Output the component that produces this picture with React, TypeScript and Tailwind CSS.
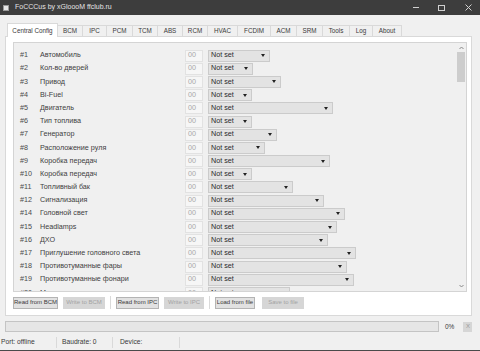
// [title, width]
const tabs: [string, number][] = [
  ["Central Config", 51],
  ["BCM", 25],
  ["IPC", 24],
  ["PCM", 26],
  ["TCM", 25],
  ["ABS", 25],
  ["RCM", 25],
  ["HVAC", 30],
  ["FCDIM", 33],
  ["ACM", 26],
  ["SRM", 26],
  ["Tools", 27],
  ["Log", 23],
  ["About", 29],
];

// [number, label, select width]
const rows: [string, string, number][] = [
  ["#1", "Автомобиль", 62],
  ["#2", "Кол-во дверей", 45],
  ["#3", "Привод", 73],
  ["#4", "Bi-Fuel", 44],
  ["#5", "Двигатель", 125],
  ["#6", "Тип топлива", 44],
  ["#7", "Генератор", 69],
  ["#8", "Расположение руля", 57],
  ["#9", "Коробка передач", 122],
  ["#10", "Коробка передач", 44],
  ["#11", "Топливный бак", 85],
  ["#12", "Сигнализация", 116],
  ["#14", "Головной свет", 137],
  ["#15", "Headlamps", 129],
  ["#16", "ДХО", 120],
  ["#17", "Приглушение головного света", 148],
  ["#18", "Противотуманные фары", 139],
  ["#19", "Противотуманные фонари", 146],
  ["#20", "Модуль привода", 82],
];

function Select({ width }: { width: number }) {
  return (
    <div
      className="h-[12px] flex items-center justify-between pl-[2px] pr-[4px] bg-[#e3e3e3] border border-[#cbcbcb] text-[#2a2a2a]"
      style={{ width }}
    >
      <span>Not set</span>
      <svg width="4" height="3" viewBox="0 0 4 3">
        <path d="M0 0h4L2 3z" fill="#222" />
      </svg>
    </div>
  );
}

function Btn({ label, width, disabled }: { label: string; width: number; disabled?: boolean }) {
  return (
    <div
      className={
        disabled
          ? "h-[12px] flex items-center justify-center bg-[#d6d6d6] border border-[#d6d6d6] text-[#a3a3a3]"
          : "h-[12px] flex items-center justify-center bg-[#e1e1e1] border border-[#b4b4b4] text-[#3a3a3a]"
      }
      style={{ width }}
    >
      {label}
    </div>
  );
}

export default function App() {
  return (
    <div
      className="w-[480px] h-[351px] bg-[#f0f0f0] flex flex-col overflow-hidden"
      style={{ fontFamily: '"Liberation Sans", Arial, sans-serif' }}
    >
      {/* title bar */}
      <div className="h-[15px] bg-[#3d3d3d] flex items-center shrink-0">
        <div className="ml-[3px] w-[6px] h-[6px] bg-[#e8e8e8] border border-[#9a9a9a]" />
        <span className="ml-[6px] text-[7px] text-[#e4e4e4]">FoCCCus by xGloooM ffclub.ru</span>
        <div className="ml-auto flex items-center h-full">
          <div className="w-[6px] h-px bg-[#d0d0d0] mr-[19px]" />
          <div className="w-[7px] h-[6px] border border-[#d0d0d0] mr-[20px]" />
          <svg width="7" height="7" viewBox="0 0 7 7" className="mr-[8px]">
            <path d="M0.5 0.5l6 6M6.5 0.5l-6 6" stroke="#d0d0d0" strokeWidth="1" />
          </svg>
        </div>
      </div>

      <div className="pl-[5px]">
        {/* tab strip */}
        <div className="h-[21px] flex items-end pl-[2px] text-[6.3px] text-[#3a3a3a]">
          {tabs.map(([t, w], i) =>
            i === 0 ? (
              <div
                key={t}
                className="h-[14px] flex items-center justify-center bg-white border border-b-0 border-[#d9d9d9] relative z-10 -mb-px"
                style={{ width: w }}
              >
                {t}
              </div>
            ) : (
              <div
                key={t}
                className="h-[11px] flex items-center justify-center bg-[#f0f0f0] border border-b-0 border-l-0 border-[#d9d9d9]"
                style={{ width: w }}
              >
                {t}
              </div>
            )
          )}
        </div>

        {/* tab page */}
        <div className="w-[467px] h-[280px] bg-white border border-[#d9d9d9] pt-[5px] pl-[7px]">
          <div className="w-[454px] h-[250px] bg-[#f0f0f0] border border-[#d4d4d4] flex">
            <div className="flex-1 overflow-hidden pt-[6px] text-[7.2px]">
              {rows.map(([n, label, w]) => (
                <div key={n} className="h-[13.2px] flex items-center">
                  <span className="w-[26px] pl-[6px] text-[#4a4a4a]">{n}</span>
                  <span className="w-[145px] text-[#404040] whitespace-nowrap">{label}</span>
                  <div className="w-[18px] h-[12px] bg-[#f6f6f6] border border-[#e2e2e2] flex items-center pl-[2px] text-[#a8a8a8]">
                    00
                  </div>
                  <div className="ml-[5px]">
                    <Select width={w} />
                  </div>
                </div>
              ))}
            </div>
            <div className="w-[10px] flex flex-col items-center bg-[#f0f0f0]">
              <svg width="5" height="4" viewBox="0 0 5 4" className="mt-[3px]">
                <path d="M0.5 3l2-2 2 2" stroke="#888" fill="none" />
              </svg>
              <div className="w-[8px] h-[30px] bg-[#cdcdcd] mt-[2px]" />
              <svg width="5" height="4" viewBox="0 0 5 4" className="mt-auto mb-[3px]">
                <path d="M0.5 1l2 2 2-2" stroke="#888" fill="none" />
              </svg>
            </div>
          </div>

          {/* button row */}
          <div className="flex items-center mt-[4px] text-[6px]">
            <Btn label="Read from BCM" width={45} />
            <div className="ml-[5px]">
              <Btn label="Write to BCM" width={42} disabled />
            </div>
            <div className="w-px h-[13px] bg-[#dadada] mx-[5px]" />
            <Btn label="Read from IPC" width={43} />
            <div className="ml-[5px]">
              <Btn label="Write to IPC" width={40} disabled />
            </div>
            <div className="w-px h-[13px] bg-[#dadada] mx-[5px]" />
            <Btn label="Load from file" width={40} />
            <div className="ml-[7px]">
              <Btn label="Save to file" width={42} disabled />
            </div>
          </div>
        </div>

        {/* progress row */}
        <div className="flex items-center mt-[5px] h-[11px]">
          <div className="w-[434px] h-[11px] bg-[#e6e6e6] border border-[#c4c4c4]" />
          <span className="ml-[6px] text-[6.5px] text-[#3a3a3a]">0%</span>
          <div className="ml-[9px] w-[9px] h-[10px] bg-[#d6d6d6] flex items-center justify-center text-[6px] text-[#9a9a9a]">
            X
          </div>
        </div>
      </div>

      {/* status bar */}
      <div className="mt-auto h-[16px] flex items-center text-[6.7px] text-[#3a3a3a] border-b border-[#4a4a4a]">
        <div className="w-[57px] pl-[1px] border-r border-[#d9d9d9] h-[11px] flex items-center">Port: offline</div>
        <div className="w-[56px] pl-[5px] border-r border-[#d9d9d9] h-[11px] flex items-center">Baudrate: 0</div>
        <div className="w-[67px] pl-[7px] border-r border-[#d9d9d9] h-[11px] flex items-center">Device:</div>
      </div>
    </div>
  );
}
